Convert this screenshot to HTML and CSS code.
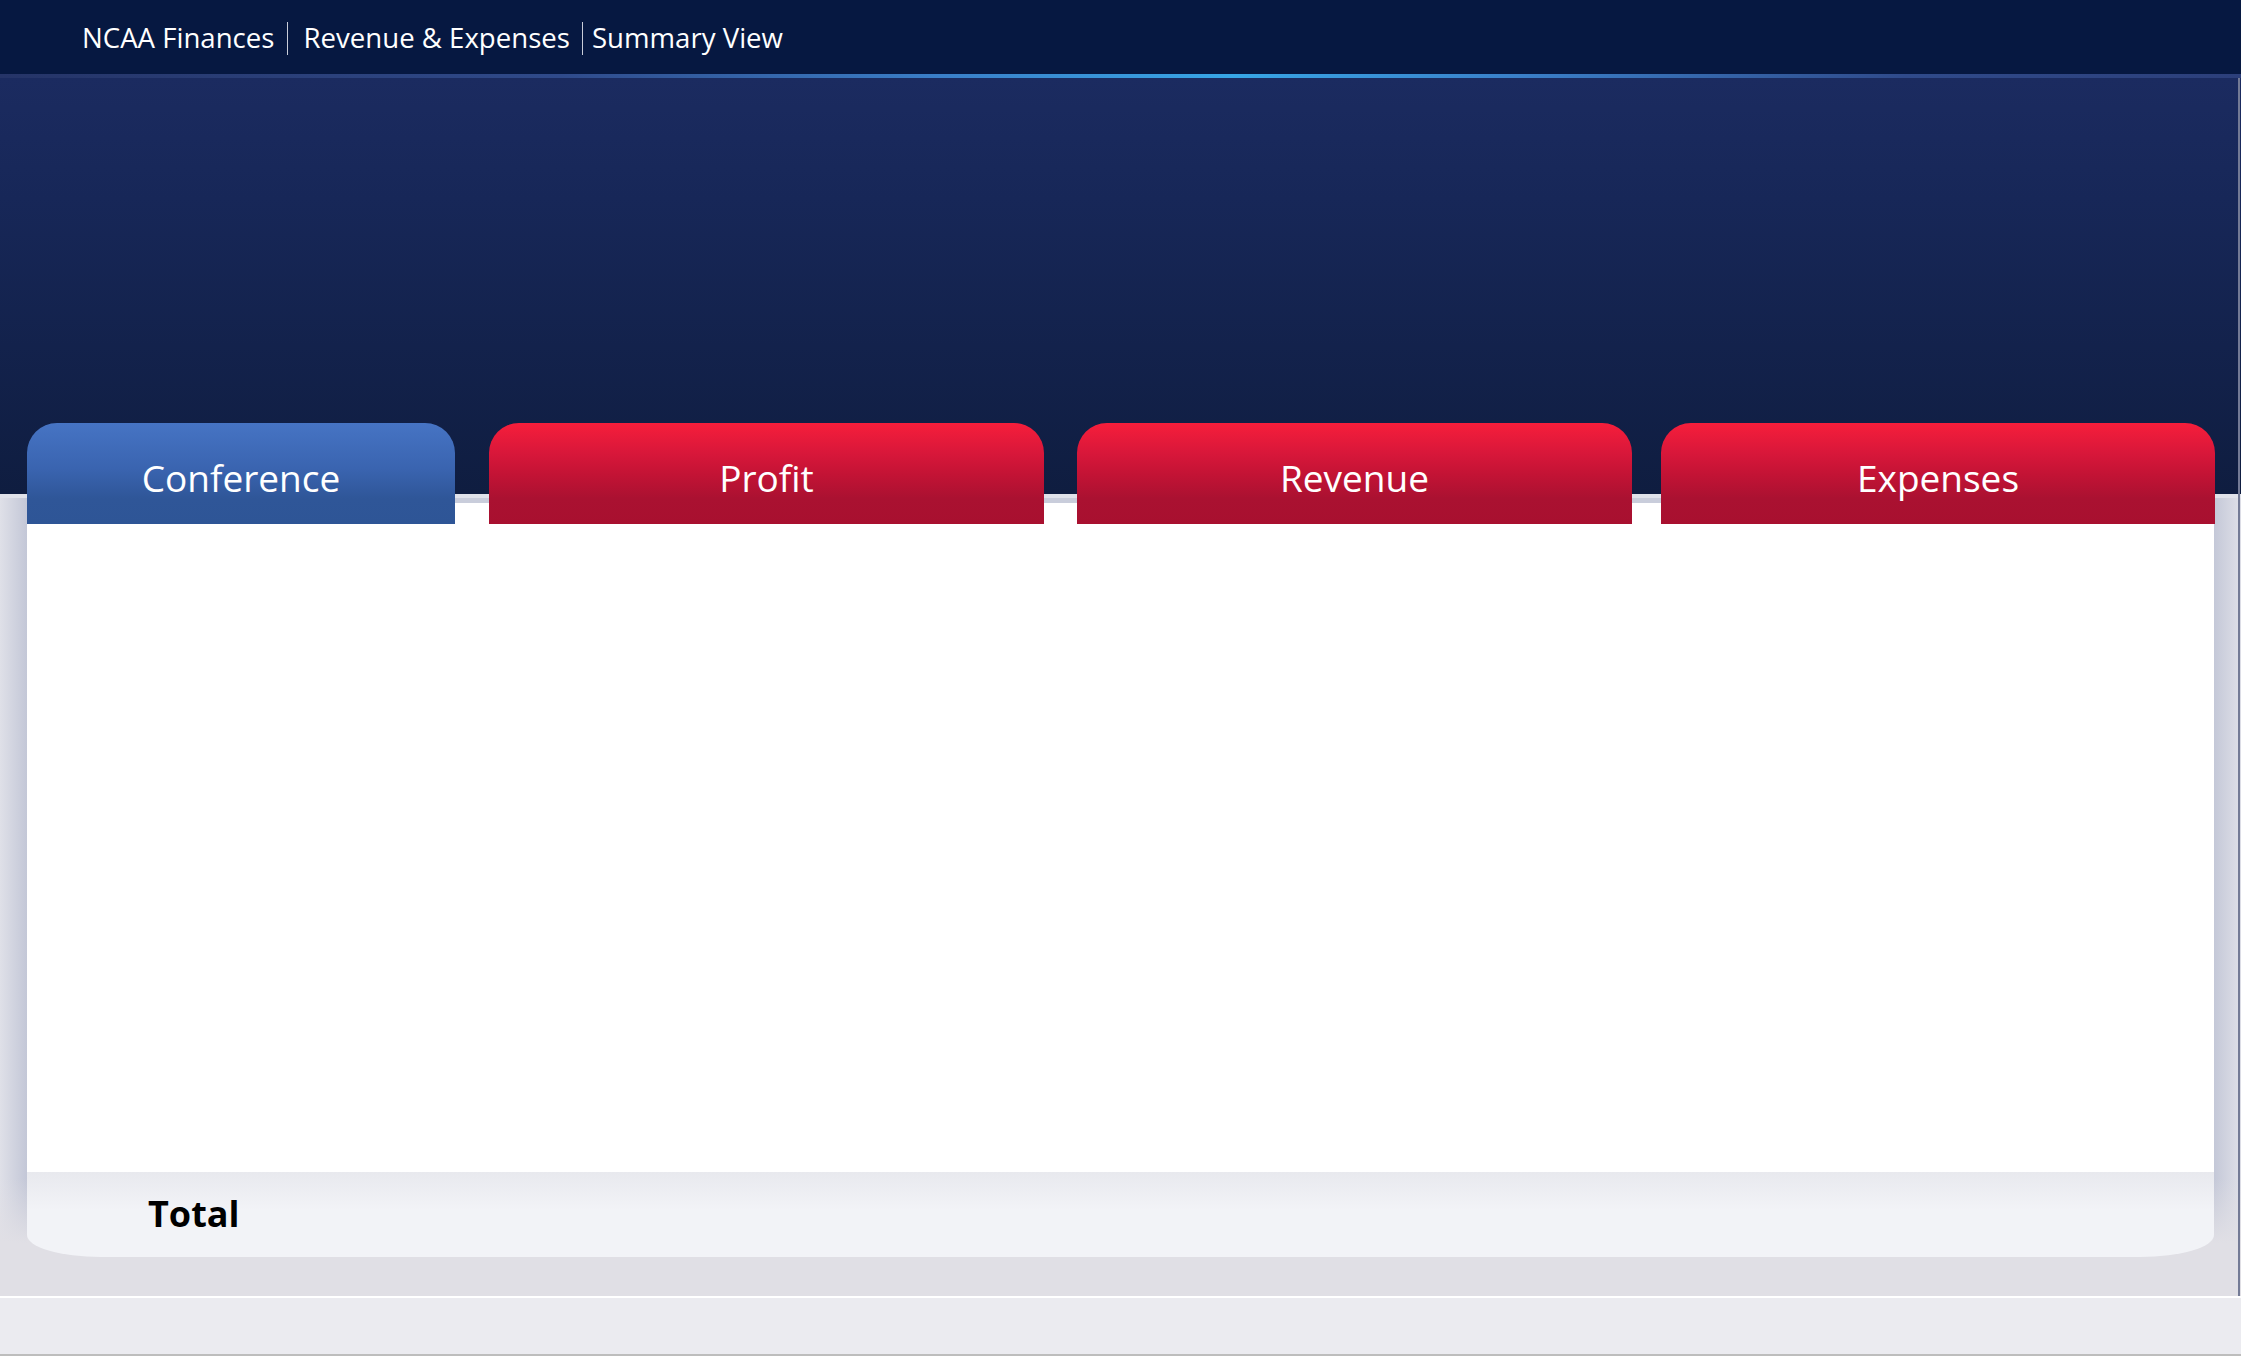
FILE: index.html
```html
<!DOCTYPE html>
<html lang="en">
<head>
<meta charset="utf-8">
<title>NCAA Finances | Revenue &amp; Expenses | Summary View</title>
<link rel="stylesheet" href="styles.css">
</head>
<body>
<div class="app">
  <header class="topbar">
    <span class="crumb crumb-first">NCAA Finances</span>
    <span class="sep"></span>
    <span class="crumb crumb-mid">Revenue &amp; Expenses</span>
    <span class="sep"></span>
    <span class="crumb crumb-last">Summary View</span>
  </header>
  <div class="accent"></div>
  <main class="stage">
    <div class="hero"></div>
    <section class="board">
      <div class="tabs">
        <div class="tab tab-blue">Conference</div>
        <div class="tab tab-red tab-profit">Profit</div>
        <div class="tab tab-red tab-revenue">Revenue</div>
        <div class="tab tab-red tab-expenses">Expenses</div>
      </div>
      <div class="body"></div>
      <div class="total">Total</div>
    </section>
  </main>
  <div class="divider"></div>
  <footer class="statusbar"></footer>
</div>
</body>
</html>
```
FILE: styles.css
```css
html, body {
  margin: 0;
  padding: 0;
}
body {
  width: 2241px;
  height: 1356px;
  overflow: hidden;
  font-family: "Open Sans", "Noto Sans", sans-serif;
  background: #ebebf0;
}
.app {
  display: flex;
  flex-direction: column;
  height: 1356px;
}
.topbar {
  height: 74px;
  flex: none;
  background: #061841;
  display: flex;
  align-items: center;
  padding-left: 82px;
  color: #ffffff;
  font-size: 27.6px;
  box-sizing: border-box;
}
.crumb {
  white-space: nowrap;
  line-height: 37px;
}
.crumb-first { margin-right: 13px; }
.crumb-mid { margin-left: 15px; margin-right: 12px; }
.crumb-last { margin-left: 9px; }
.sep {
  width: 1px;
  height: 33px;
  background: #c9cdd9;
  margin-top: 3px;
}
.accent {
  height: 4px;
  flex: none;
  background: linear-gradient(to right, #253467 0%, #2f4a8a 25%, #3a7fc8 42%, #37a6e6 55%, #3a7fc8 68%, #2f4a8a 85%, #2c3f7a 100%);
}
.stage {
  height: 1218px;
  flex: none;
  box-sizing: border-box;
  background:
    linear-gradient(to right, transparent 2238px, #737a95 2238px, #737a95 2240px, transparent 2240px),
    linear-gradient(to bottom, #1b2b60 0px, #172758 120px, #0f1d40 416px) 0 0 / 100% 416px no-repeat,
    linear-gradient(to bottom, #e0e2ea 0px, #e0e2ea 4px, transparent 4px) 0 416px / 100% 10px no-repeat,
    linear-gradient(to bottom, transparent 0px, transparent 1100px, #e0dfe5 1165px),
    linear-gradient(to right, #dfe0e8 0px, #c3c7d7 27px, transparent 27px, transparent 2213px, #c3c7d7 2213px, #dcdde6 2238px),
    #e0dfe5;
}
.hero {
  height: 345px;
}
.board {
  width: 2187px;
  margin-left: 27px;
  display: flex;
  flex-direction: column;
}
.tabs {
  height: 101px;
  display: flex;
  background: linear-gradient(to bottom, transparent 0px, transparent 71px, #e0e2ea 71px, #e0e2ea 75px, #c9cddb 75px, #c9cddb 80px, #ffffff 80px);
}
.tab {
  flex: none;
  width: 555px;
  border-radius: 30px 30px 0 0;
  color: #ffffff;
  font-size: 37px;
  line-height: 50px;
  text-align: center;
  padding-top: 30px;
  box-sizing: border-box;
}
.tab-blue {
  width: 428px;
  background: linear-gradient(to bottom, #4674c4 0%, #3a64b0 45%, #2f5698 75%, #2e5596 100%);
}
.tab-red {
  background: linear-gradient(to bottom, #f61e3b 0%, #d8173a 30%, #c41335 50%, #aa1131 75%, #a8102f 100%);
}
.tab-profit { margin-left: 34px; }
.tab-revenue { margin-left: 33px; }
.tab-expenses { margin-left: 29px; width: 554px; }
.body {
  height: 648px;
  background: #ffffff;
}
.total {
  height: 85px;
  box-sizing: border-box;
  padding: 17px 0 0 121px;
  font-size: 36px;
  font-weight: 700;
  line-height: 49px;
  color: #000000;
  background: linear-gradient(to bottom, #e8e9ee 0%, #f2f3f7 45%, #f2f3f7 100%);
  border-radius: 0 0 74px 74px / 0 0 22px 22px;
}
.divider {
  height: 2px;
  flex: none;
  background: #ffffff;
}
.statusbar {
  height: 56px;
  flex: none;
  background: #ebebf0;
  border-bottom: 2px solid #bdbdbd;
}
```
